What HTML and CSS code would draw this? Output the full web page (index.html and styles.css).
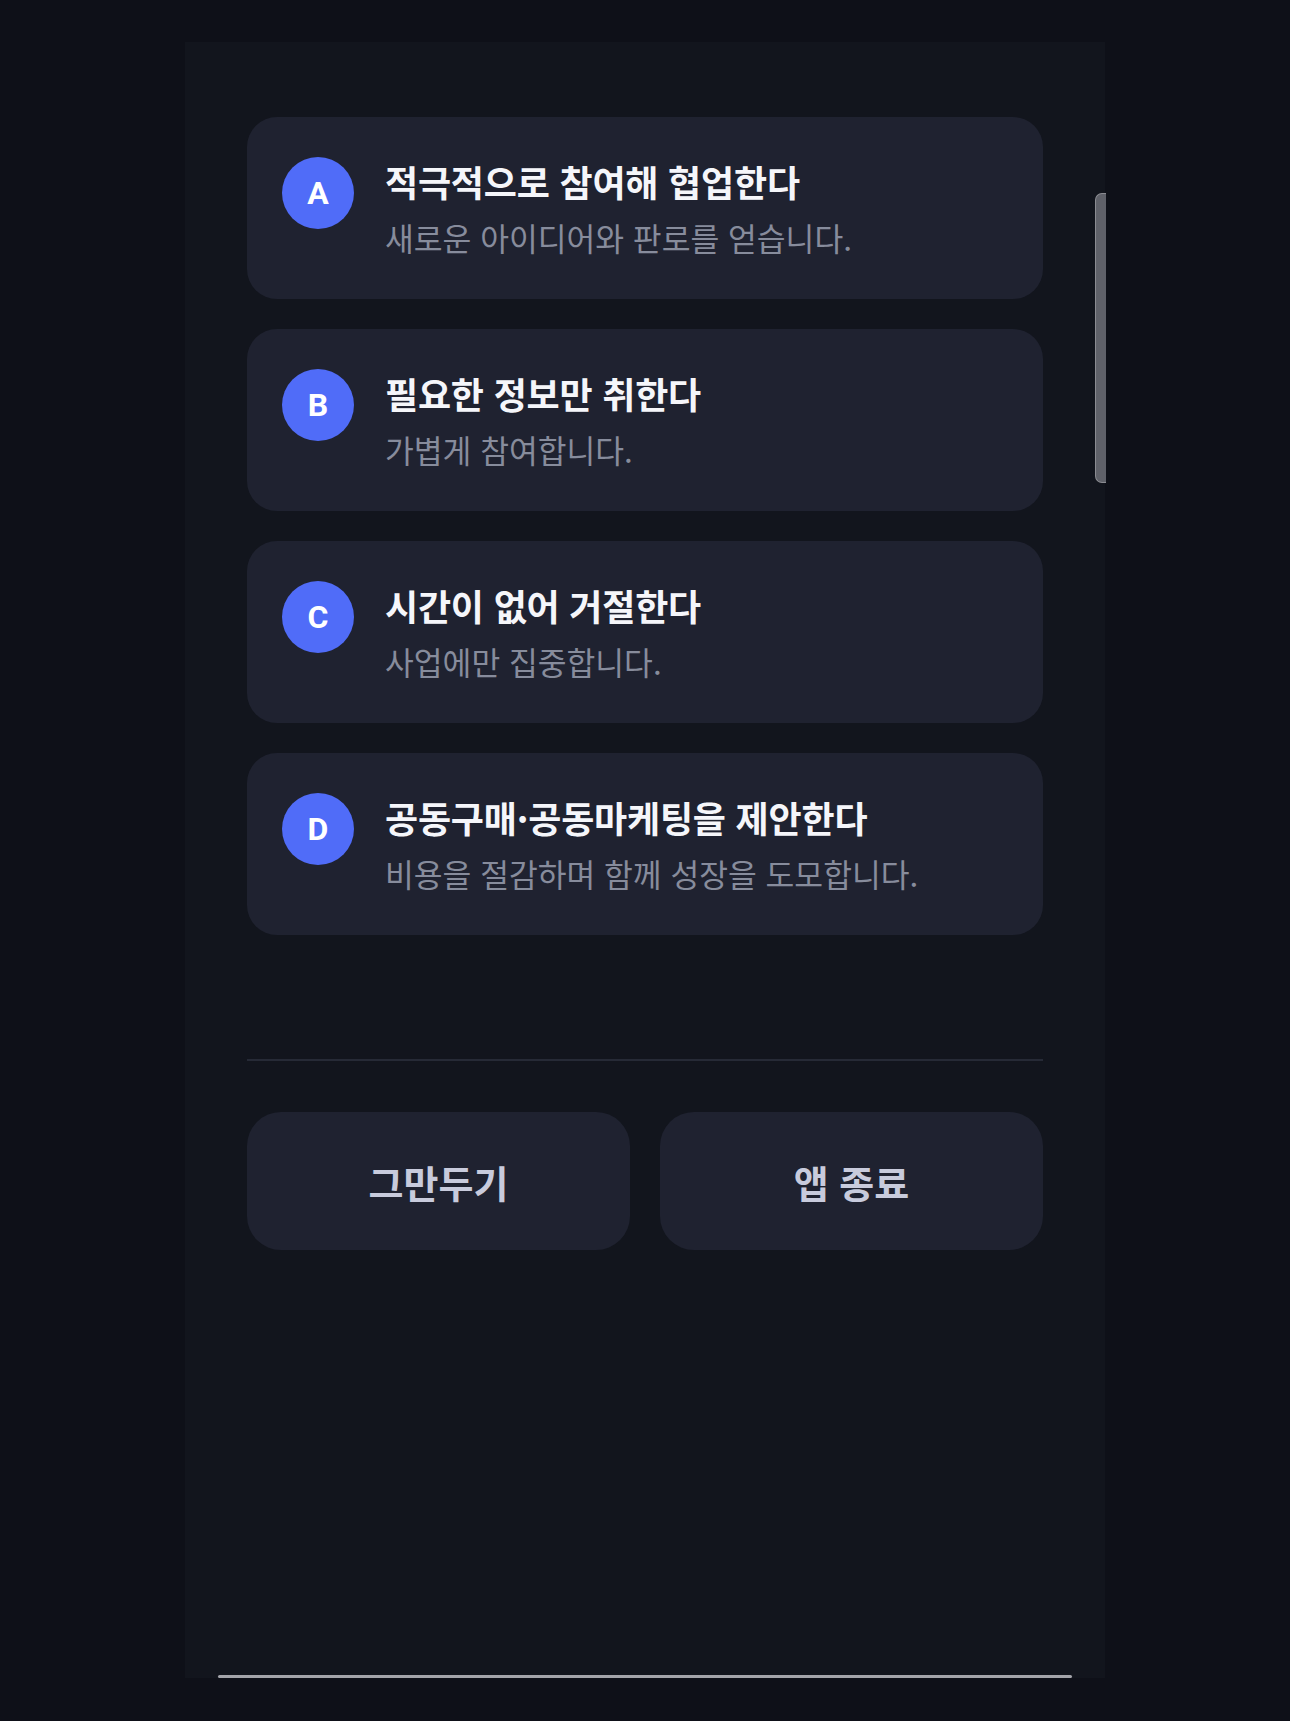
FILE: index.html
```html
<!DOCTYPE html>
<html lang="ko">
<head>
<meta charset="utf-8">
<title>선택</title>
<link rel="stylesheet" href="styles.css">
</head>
<body>
<div class="panel">
  <div class="content">
    <div class="options">
      <div class="option">
        <div class="badge">A</div>
        <div class="texts">
          <div class="title">적극적으로 참여해 협업한다</div>
          <div class="desc">새로운 아이디어와 판로를 얻습니다.</div>
        </div>
      </div>
      <div class="option">
        <div class="badge">B</div>
        <div class="texts">
          <div class="title">필요한 정보만 취한다</div>
          <div class="desc">가볍게 참여합니다.</div>
        </div>
      </div>
      <div class="option">
        <div class="badge">C</div>
        <div class="texts">
          <div class="title">시간이 없어 거절한다</div>
          <div class="desc">사업에만 집중합니다.</div>
        </div>
      </div>
      <div class="option">
        <div class="badge">D</div>
        <div class="texts">
          <div class="title">공동구매·공동마케팅을 제안한다</div>
          <div class="desc">비용을 절감하며 함께 성장을 도모합니다.</div>
        </div>
      </div>
    </div>
    <div class="divider"></div>
    <div class="actions">
      <button class="action">그만두기</button>
      <button class="action">앱 종료</button>
    </div>
  </div>
  <div class="home-bar"></div>
  <div class="scroll-thumb"></div>
</div>
</body>
</html>
```

FILE: styles.css
```css
html, body {
  margin: 0;
  padding: 0;
}
body {
  background: #0e1018;
  width: 1290px;
  height: 1721px;
  box-sizing: border-box;
  padding: 42px 185px 43px;
  font-family: "Noto Sans CJK KR", "Noto Sans", sans-serif;
}
.panel {
  position: relative;
  width: 920px;
  height: 1636px;
  background: #12151d;
  display: flex;
  flex-direction: column;
}
.content {
  padding: 75px 62px 0;
}
.options {
  display: flex;
  flex-direction: column;
  gap: 30px;
}
.option {
  height: 182px;
  box-sizing: border-box;
  background: #1f2230;
  border-radius: 30px;
  padding: 40px 35px;
  display: flex;
  align-items: flex-start;
  gap: 31px;
}
.badge {
  flex: none;
  width: 72px;
  height: 72px;
  border-radius: 50%;
  background: #506cf8;
  color: #ffffff;
  font-family: Roboto, "Liberation Sans", sans-serif;
  font-weight: 700;
  font-size: 32px;
  display: flex;
  align-items: center;
  justify-content: center;
}
.texts {
  display: flex;
  flex-direction: column;
}
.title {
  color: #f5f6fa;
  font-size: 36px;
  font-weight: 700;
  line-height: 48px;
  letter-spacing: -0.2px;
}
.desc {
  color: #878c9c;
  font-size: 31.3px;
  font-weight: 400;
  line-height: 40px;
  margin-top: 13px;
}
.divider {
  height: 2px;
  background: #262a36;
  margin-top: 124px;
}
.actions {
  margin-top: 51px;
  display: grid;
  grid-template-columns: 1fr 1fr;
  gap: 30px;
}
.action {
  height: 138px;
  border: none;
  border-radius: 34px;
  background: #1f2230;
  color: #c8cbdc;
  font-family: "Noto Sans CJK KR", "Noto Sans", sans-serif;
  font-size: 38px;
  font-weight: 700;
  padding: 0;
}
.home-bar {
  margin: auto 33px 0;
  height: 3px;
  background: #a3a4aa;
  border-radius: 2px;
}
.scroll-thumb {
  position: absolute;
  right: -1px;
  top: 151px;
  width: 11px;
  height: 290px;
  box-sizing: border-box;
  background: #5f6169;
  border: 1px solid #8a8b91;
  border-right: none;
  border-radius: 7px 0 0 7px;
}
```
